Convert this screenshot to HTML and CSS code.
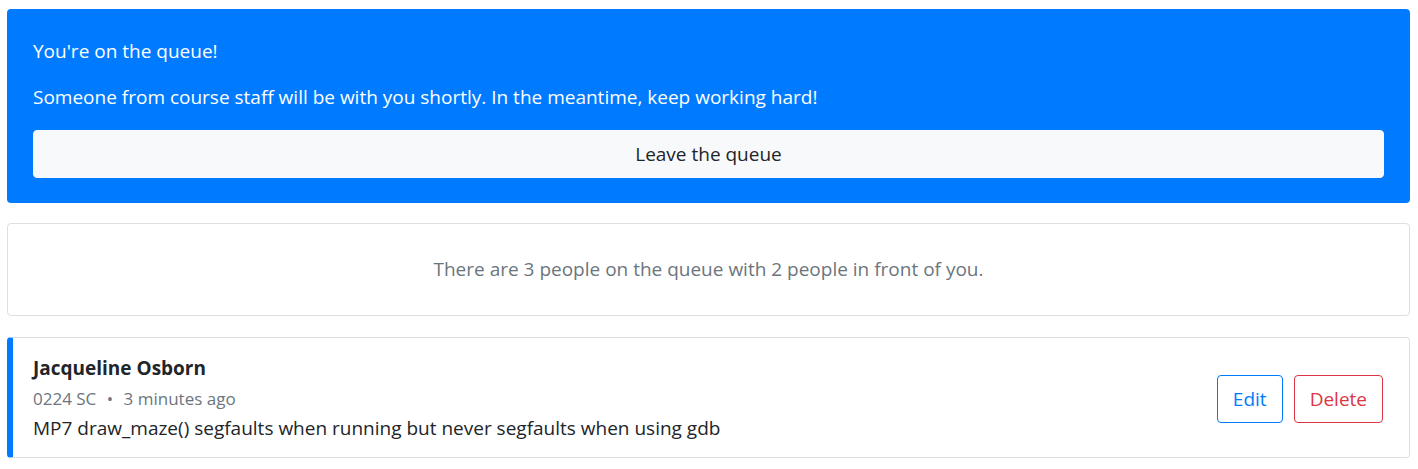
FILE: index.html
```html
<!DOCTYPE html>
<html lang="en">
<head>
<meta charset="utf-8">
<title>Queue</title>
<link rel="stylesheet" href="styles.css">
</head>
<body>
<main class="page">
  <section class="alert">
    <p class="alert-line first">You're on the queue!</p>
    <p class="alert-line second">Someone from course staff will be with you shortly. In the meantime, keep working hard!</p>
    <button class="btn btn-light btn-block">Leave the queue</button>
  </section>

  <section class="card info">
    <p class="muted">There are 3 people on the queue with 2 people in front of you.</p>
  </section>

  <section class="card question">
    <div class="q-body">
      <div class="q-name">Jacqueline Osborn</div>
      <div class="q-meta">0224 SC <span class="dot">•</span> 3 minutes ago</div>
      <div class="q-text">MP7 draw_maze() segfaults when running but never segfaults when using gdb</div>
    </div>
    <div class="q-actions">
      <button class="btn btn-outline-primary">Edit</button>
      <button class="btn btn-outline-danger">Delete</button>
    </div>
  </section>
</main>
</body>
</html>
```

FILE: styles.css
```css
* { box-sizing: border-box; }
html, body { margin: 0; padding: 0; background: #fff; }
body {
  font-family: "Open Sans", "Noto Sans", sans-serif;
  font-size: 19px;
  line-height: 27px;
  color: #212529;
}
.page {
  padding: 9px 8px 0 7px;
  display: flex;
  flex-direction: column;
}
.alert {
  background: #007bff;
  color: #fff;
  border-radius: 4px;
  padding: 29px 26px 25px 26px;
}
.alert-line { margin: 0; }
.alert-line.first { margin-bottom: 19px; }
.alert-line.second { margin-bottom: 19px; }
.btn {
  font-family: inherit;
  font-size: 19px;
  line-height: 30px;
  padding: 8px 15px;
  border: 1px solid transparent;
  border-radius: 4px;
  background: transparent;
  cursor: pointer;
}
.btn-block { display: block; width: 100%; }
.btn-light { background: #f8f9fa; border-color: #f8f9fa; color: #212529; }
.btn-outline-primary { color: #007bff; border-color: #007bff; }
.btn-outline-danger { color: #dc3545; border-color: #dc3545; }
.card {
  border: 1px solid #dfdfdf;
  border-radius: 4px;
  background: #fff;
}
.info {
  margin-top: 20px;
  padding: 32px 20px;
  text-align: center;
}
.muted { margin: 0; color: #6c757d; }
.question {
  margin-top: 21px;
  border-left: 6px solid #007bff;
  padding: 17px 26px 15px 20px;
  display: flex;
  align-items: center;
  justify-content: space-between;
}
.q-name { font-weight: 700; margin-bottom: 4px; }
.q-meta { color: #6c757d; font-size: 17px; line-height: 25px; margin-bottom: 4px; }
.q-meta .dot { margin: 0 6px; }
.q-actions { display: flex; gap: 11px; }
```
